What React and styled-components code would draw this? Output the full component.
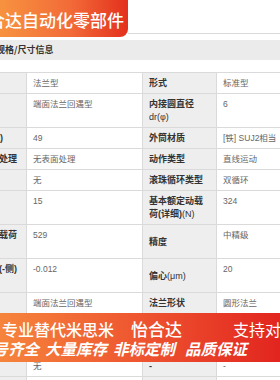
import React from 'react';
import styled, { createGlobalStyle } from 'styled-components';

const GlobalStyle = createGlobalStyle`
  html, body {
    margin: 0;
    padding: 0;
    background: #fff;
  }
  body {
    font-family: 'Liberation Sans', 'Noto Sans CJK SC', sans-serif;
    overflow: hidden;
  }
`;

const Page = styled.div`
  position: relative;
  width: 280px;
  height: 380px;
  overflow: hidden;
  background: #fff;
`;

const TopBar = styled.div`
  display: flex;
  align-items: flex-start;
  height: 37px;
`;

const Logo = styled.div`
  flex: 0 0 128px;
  height: 37px;
  overflow: hidden;
  border-bottom-right-radius: 8px;
  background: linear-gradient(90deg, #f7923f 0%, #f26b38 55%, #e4301d 100%);
  color: #fff;
  font-family: 'Noto Sans CJK SC', sans-serif;
  font-size: 17px;
  font-weight: 500;
  line-height: 39px;
  white-space: nowrap;
`;

const LogoText = styled.span`
  display: inline-block;
  margin-left: -29px;
`;

const TabLine = styled.div`
  flex: 1;
  height: 33px;
  border-bottom: 1px solid #d9d9d9;
`;

const SectionHeader = styled.div`
  margin-top: 3px;
  height: 20px;
  background: #ebebeb;
  color: #333;
  font-family: 'Noto Sans CJK SC', sans-serif;
  font-size: 9px;
  font-weight: bold;
  line-height: 20px;
  text-indent: -4px;
  white-space: nowrap;
`;

const SpecTable = styled.table`
  margin-top: 12px;
  margin-left: -26px;
  width: 322px;
  border-collapse: collapse;
  table-layout: fixed;
`;

const Cell = styled.td`
  border: 1px solid #dadada;
  padding: 4px 6px 3px;
  line-height: 13px;
  font-size: 8.5px;
  color: #666;
  vertical-align: top;
  text-align: left;
  overflow: hidden;
`;

const Label = styled.th`
  border: 1px solid #dadada;
  padding: 4px 6px 3px;
  line-height: 13px;
  font-size: 9px;
  font-weight: bold;
  color: #333;
  background: #eeeeee;
  vertical-align: middle;
  text-align: left;
  white-space: ${(p) => (p.$nowrap ? 'nowrap' : 'normal')};
  overflow: hidden;
`;

const Unit = styled.span`
  font-weight: normal;
`;

const Promo = styled.div`
  position: absolute;
  top: 313px;
  left: 0;
  right: 0;
  height: 49px;
  overflow: hidden;
  background: linear-gradient(90deg, #f6843c 0%, #ee5530 50%, #e2251f 100%);
  color: #fff;
  font-family: 'Noto Sans CJK SC', sans-serif;
  white-space: nowrap;
`;

const PromoLine = styled.div`
  display: flex;
  align-items: center;
  height: ${(p) => p.$height}px;
  margin-top: ${(p) => p.$top || 0}px;
  font-size: ${(p) => p.$size}px;
  line-height: ${(p) => p.$height}px;
  font-weight: ${(p) => (p.$bold ? 'bold' : 500)};
  font-style: ${(p) => (p.$italic ? 'italic' : 'normal')};
`;

const Chunk = styled.span`
  flex: none;
  margin-left: ${(p) => p.$gap}px;
  font-size: ${(p) => (p.$size ? `${p.$size}px` : 'inherit')};
  font-weight: ${(p) => p.$weight || 'inherit'};
`;

const rows = [
  { l1: '类型', v1: '法兰型', l2: '形式', v2: '标准型' },
  { l1: '形状', v1: '端面法兰回遇型', l2: <>内接圆直径<br /><Unit>dr(φ)</Unit></>, v2: '6' },
  { l1: '(mm)', v1: '49', l2: '外筒材质', v2: '[铁] SUJ2相当' },
  { l1: '表面处理', v1: '无表面处理', l2: '动作类型', v2: '直线运动' },
  { l1: '润滑', v1: '无', l2: '滚珠循环类型', v2: '双循环' },
  { l1: '密封', v1: '15', l2: <>基本额定动载<br />荷(详细)<Unit>(N)</Unit></>, v2: '324' },
  { l1: <>静态载荷<br />N</>, v1: '529', l2: '精度', v2: '中精级' },
  { l1: <>公差(-侧)<br />μm</>, v1: '-0.012', l2: <>偏心<Unit>(μm)</Unit></>, v2: '20' },
  { l1: '类型', v1: '端面法兰回遇型', l2: '法兰形状', v2: '圆形法兰' },
  { l1: '材质', v1: 'SUJ2', l2: '保持器', v2: '树脂' },
  { l1: '硬度', v1: 'HRC58~', l2: '防尘', v2: '无' },
  { l1: '端面', v1: '无', l2: '-', v2: '-' },
  { l1: '备注', v1: '-', l2: '-', v2: '-' },
];

const App = () => {
  return (
    <Page>
      <GlobalStyle />
      <TopBar>
        <Logo>
          <LogoText>怡合达自动化零部件</LogoText>
        </Logo>
        <TabLine />
      </TopBar>
      <SectionHeader>规格/尺寸信息</SectionHeader>
      <SpecTable>
        <colgroup>
          <col style={{ width: 52 }} />
          <col style={{ width: 116 }} />
          <col style={{ width: 74 }} />
          <col style={{ width: 80 }} />
        </colgroup>
        <tbody>
          {rows.map((r, i) => (
            <tr key={i}>
              <Label $nowrap>{r.l1}</Label>
              <Cell>{r.v1}</Cell>
              <Label>{r.l2}</Label>
              <Cell>{r.v2}</Cell>
            </tr>
          ))}
        </tbody>
      </SpecTable>
      <Promo>
        <PromoLine $top={6} $height={20} $size={16}>
          <Chunk $gap={2}>专业替代米思米</Chunk>
          <Chunk $gap={17} $size={17}>怡合达</Chunk>
          <Chunk $gap={51} $weight={400}>支持对标定制</Chunk>
        </PromoLine>
        <PromoLine $height={18} $size={15.5} $bold $italic>
          <Chunk $gap={-23}>型号齐全</Chunk>
          <Chunk $gap={6}>大量库存</Chunk>
          <Chunk $gap={6}>非标定制</Chunk>
          <Chunk $gap={10}>品质保证</Chunk>
        </PromoLine>
      </Promo>
    </Page>
  );
};

export default App;
